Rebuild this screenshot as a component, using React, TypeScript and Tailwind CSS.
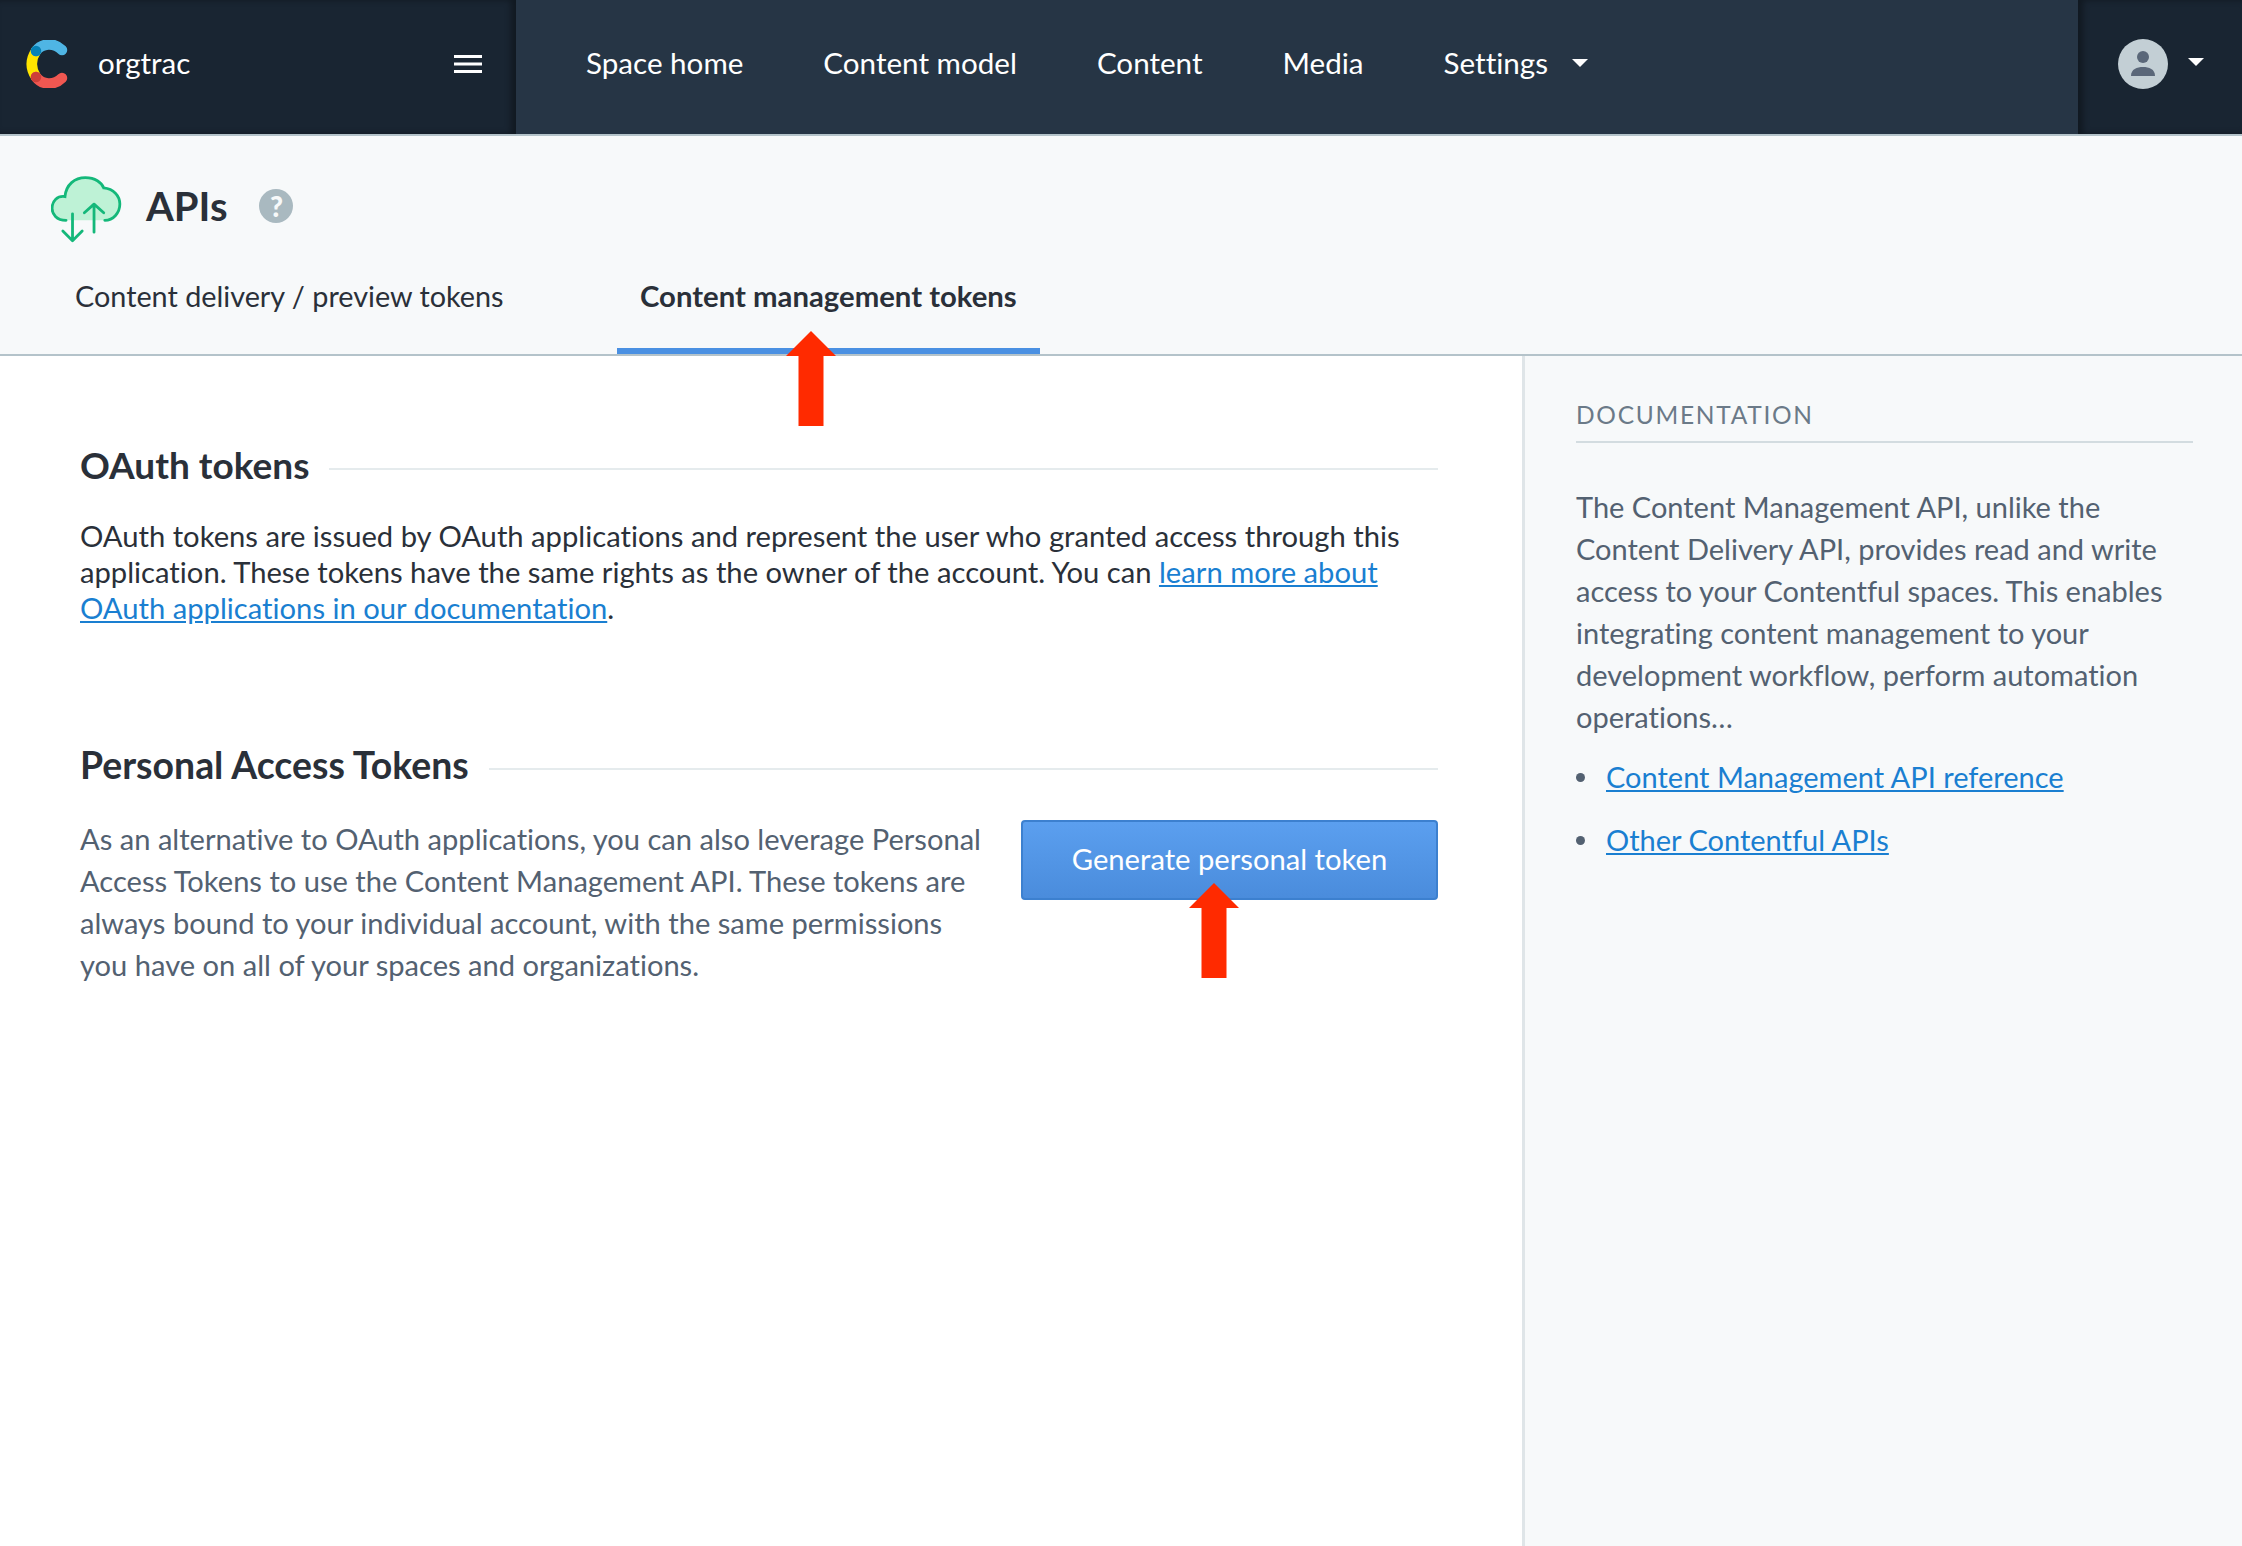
const font = { fontFamily: '"Lato", "Noto Sans", sans-serif', fontVariantLigatures: 'none' }

function Logo() {
  return (
    <svg width="42" height="48" viewBox="0 0 42 48" fill="none" strokeLinecap="round" strokeWidth="10.5">
      <path d="M10 11 Q1.5 24 10 37" stroke="#FFE500" />
      <path d="M10 11 C 16 3 28 2 36 10" stroke="#4FB5E4" />
      <path d="M10 37 C 16 45 28 46 36 38" stroke="#F05751" />
      <circle cx="10" cy="11" r="5.25" fill="#0681B6" />
      <circle cx="10" cy="37" r="5.25" fill="#CD3F39" />
    </svg>
  )
}

function Hamburger() {
  return (
    <svg width="28" height="18" viewBox="0 0 28 18" fill="white">
      <rect y="0" width="28" height="3" />
      <rect y="7.5" width="28" height="3" />
      <rect y="15" width="28" height="3" />
    </svg>
  )
}

function CloudIcon() {
  return (
    <svg width="71" height="67" viewBox="0 0 66 62" fill="none" preserveAspectRatio="none">
      <path
        d="M14 41 C 5 41 1 35 1 30 C 1 23 6 18 13 19 C 14 8 22 1.500 32 1.500 C 41 1.500 47 6 49 11 C 58 12 64 18 64 26 C 64 34 58 41 50 41 Z"
        fill="#BEF2D6"
      />
      <path
        d="M14 41 C 5 41 1 35 1 30 C 1 23 6 18 13 19 C 14 8 22 1.500 32 1.500 C 41 1.500 47 6 49 11 C 58 12 64 18 64 26 C 64 34 58 41 50 41"
        stroke="#14B87A"
        strokeWidth="2.600"
        strokeLinecap="round"
      />
      <path d="M20 35 V60 M11 51 L20 60 L29 51" stroke="#14B87A" strokeWidth="2.600" strokeLinecap="round" strokeLinejoin="round" />
      <path d="M40 52 V26 M31 34 L40 26 L49 34" stroke="#14B87A" strokeWidth="2.600" strokeLinecap="round" strokeLinejoin="round" />
    </svg>
  )
}

function Caret({ className }: { className: string }) {
  return <div className={`h-0 w-0 border-x-[8px] border-t-[8px] border-x-transparent border-t-white ${className}`} />
}

function RedArrow({ className }: { className: string }) {
  return (
    <svg className={`absolute ${className}`} width="50" height="95" viewBox="0 0 50 95">
      <path d="M25 0 L50 25 H37.5 V95 H12.5 V25 H0 Z" fill="#FF2A00" />
    </svg>
  )
}

function SectionTitle({ title, size }: { title: string; size: string }) {
  return (
    <div className="flex items-center gap-5">
      <h2 className={`${size} leading-[44px] font-bold whitespace-nowrap text-[#2a3039]`}>{title}</h2>
      <div className="mt-[8px] h-0.5 flex-1 bg-[#e5ebed]" />
    </div>
  )
}

function DocLink({ label, className }: { label: string; className: string }) {
  return (
    <li className={`flex items-center gap-[21px] ${className}`}>
      <span className="h-[9px] w-[9px] rounded-full bg-[#536171]" />
      <a className="text-[#1a7fd1] underline">{label}</a>
    </li>
  )
}

export default function App() {
  return (
    <div className="flex h-[1546px] w-[2242px] flex-col overflow-hidden bg-white" style={font}>
      <header className="flex h-[136px] shrink-0 border-b-2 border-[#b4c3ca] bg-[#263545] text-white">
        <div className="flex w-[516px] items-center justify-between bg-[#192532] pr-[34px] pb-[7px] pl-[26px] shadow-[inset_-5px_0_6px_rgba(0,0,0,0.35)]">
          <div className="flex items-center gap-[30px]">
            <Logo />
            <span className="text-[29.5px]">orgtrac</span>
          </div>
          <Hamburger />
        </div>
        <nav className="flex flex-1 items-center gap-[80px] pb-[8px] pl-[70px] text-[29.6px]">
          <span>Space home</span>
          <span>Content model</span>
          <span>Content</span>
          <span>Media</span>
          <div className="flex items-center gap-[24px]">
            <span>Settings</span>
            <Caret className="" />
          </div>
        </nav>
        <div className="flex w-[164px] items-center gap-[20px] bg-[#192532] pb-[6px] pl-[40px] shadow-[inset_5px_0_6px_rgba(0,0,0,0.35)]">
          <div className="flex h-[50px] w-[50px] items-center justify-center rounded-full bg-[#c3cfd5]">
            <svg width="26" height="26" viewBox="0 0 26 26" fill="#5a6779">
              <circle cx="13" cy="6" r="6" />
              <path d="M1 25 C 1 18 7 16 13 16 C 19 16 25 18 25 25 Z" />
            </svg>
          </div>
          <Caret className="-mt-[4px]" />
        </div>
      </header>

      <section className="flex h-[220px] shrink-0 flex-col justify-between border-b-2 border-[#b4c3ca] bg-[#f7f9fa]">
        <div className="flex items-center pt-[40px] pl-[51px]">
          <CloudIcon />
          <h1 className="mb-[7px] ml-[24px] text-[40px] leading-[56px] font-bold text-[#2a3039]">APIs</h1>
          <div className="mb-[7px] ml-[32px] flex h-[34px] w-[34px] items-center justify-center rounded-full bg-[#a9b9c0] text-[28px] leading-none font-black text-[#f7f9fa]">
            ?
          </div>
        </div>
        <div className="flex pl-[52px] leading-[34px] text-[#2a3039]">
          <div className="h-[86px] w-[565px] pt-[11px] pl-[23px] text-[28.8px]">Content delivery / preview tokens</div>
          <div className="relative h-[86px] w-[423px] border-b-[6px] border-[#4a90e2] pt-[11px] pl-[23px] text-[29.3px] font-bold whitespace-nowrap">
            Content management tokens
            <RedArrow className="-bottom-[78px] left-[169px]" />
          </div>
        </div>
      </section>

      <div className="flex flex-1">
        <main className="w-[1522px] shrink-0 pt-[87px] pr-[84px] pl-[80px]">
          <SectionTitle title="OAuth tokens" size="text-[37px]" />
          <p className="mt-[31px] text-[29.2px] leading-[36px] text-[#2a3039]">
            OAuth tokens are issued by OAuth applications and represent the user who granted access through this application. These tokens have the same rights as the owner of the account. You can{' '}
            <a className="text-[#1a7fd1] underline">learn more about OAuth applications in our documentation</a>.
          </p>
          <div className="mt-[117px]">
            <SectionTitle title="Personal Access Tokens" size="text-[37.4px]" />
          </div>
          <div className="mt-[31px] flex items-start justify-between">
            <p className="w-[910px] text-[29.1px] leading-[42px] text-[#536171]">
              As an alternative to OAuth applications, you can also leverage Personal Access Tokens to use the Content Management API. These tokens are always bound to your individual account, with the same permissions you have on all of your spaces and organizations.
            </p>
            <button
              type="button"
              className="relative mt-[2px] h-[80px] w-[417px] rounded-[4px] border-2 border-[#3c80cf] bg-linear-to-b from-[#5b9fef] to-[#4a8cdc] pb-[3px] text-[29.2px] text-white"
            >
              Generate personal token
              <RedArrow className="top-[61px] left-[166px]" />
            </button>
          </div>
        </main>

        <aside className="flex-1 border-l-[3px] border-[#dfe5e8] bg-[#f7f9fa] pt-[45px] pr-[49px] pl-[51px]">
          <h3 className="border-b-2 border-[#d3dce0] pb-[12px] text-[24.5px] leading-[28px] tracking-[0.07em] text-[#6b7a88]">DOCUMENTATION</h3>
          <p className="mt-[43px] text-[29px] leading-[42px] text-[#536171]">
            The Content Management API, unlike the Content Delivery API, provides read and write access to your Contentful spaces. This enables integrating content management to your development workflow, perform automation operations…
          </p>
          <ul className="mt-[18px] text-[29px] leading-[42px]">
            <DocLink label="Content Management API reference" className="" />
            <DocLink label="Other Contentful APIs" className="mt-[21px]" />
          </ul>
        </aside>
      </div>
    </div>
  )
}
